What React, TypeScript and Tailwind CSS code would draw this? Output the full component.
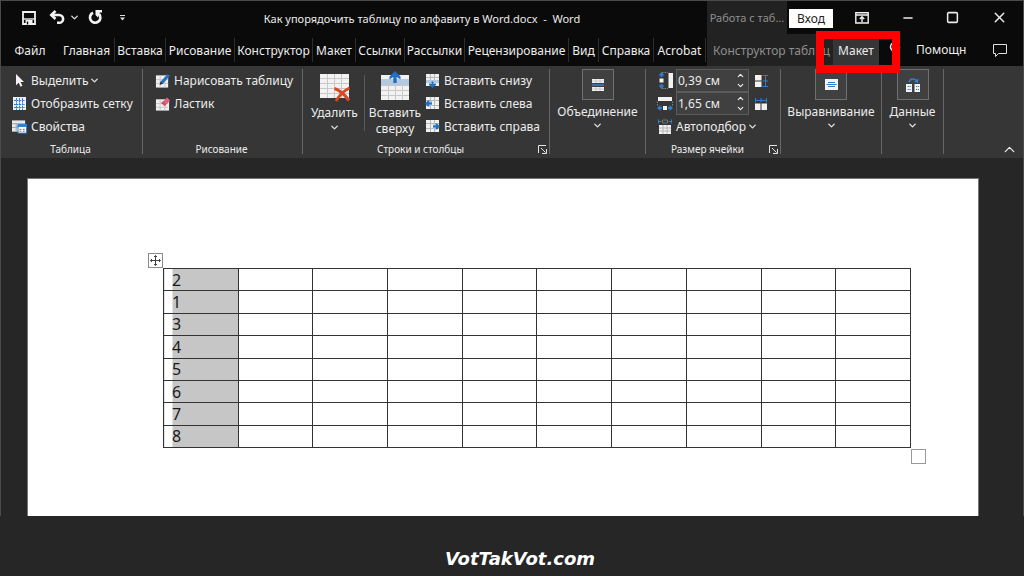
import type { ReactNode } from 'react';
import { ChevronDown, ChevronUp, Lightbulb, Minus, Square, X } from 'lucide-react';

const BLUE = '#2f7fd0';

const tabs = [
  { label: 'Главная', width: 'w-[56px]' },
  { label: 'Вставка', width: 'w-[51px]' },
  { label: 'Рисование', width: 'w-[69px]' },
  { label: 'Конструктор', width: 'w-[78px]' },
  { label: 'Макет', width: 'w-[43px]' },
  { label: 'Ссылки', width: 'w-[49px]' },
  { label: 'Рассылки', width: 'w-[60px]' },
  { label: 'Рецензирование', width: 'w-[104px]' },
  { label: 'Вид', width: 'w-[30px]' },
  { label: 'Справка', width: 'w-[55px]' },
  { label: 'Acrobat', width: 'w-[52px]' },
];

function SaveIcon() {
  return (
    <svg width="14" height="14" viewBox="0 0 14 14" fill="none" stroke="#f2f2f2" strokeWidth="1.8">
      <path d="M1 1h12v12H1z" />
      <path d="M1 8h12" strokeWidth="1.4" />
      <path d="M3.500 9h7v4h-7z" fill="#f2f2f2" stroke="none" />
      <path d="M5.500 10.500v3" stroke="#0a0a0a" strokeWidth="1.400" />
    </svg>
  );
}

function UndoIcon() {
  return (
    <svg width="16" height="15" viewBox="0 0 16 15" fill="none" stroke="#f2f2f2" strokeWidth="2.6">
      <path d="M6.500 1 2.300 5l4.200 4" />
      <path d="M2.500 5h7.700a3.800 3.800 0 0 1 0 7.800H8" />
    </svg>
  );
}

function RedoIcon() {
  return (
    <svg width="15" height="15" viewBox="0 0 15 15" fill="none" stroke="#f2f2f2" strokeWidth="2.7">
      <path d="M5 2.800A5.200 5.200 0 1 0 11 4" />
      <path d="M7.500 0H14v2.400h-2.200L10 7.500 7.500 5z" fill="#f2f2f2" stroke="none" />
    </svg>
  );
}

function CustomizeIcon() {
  return (
    <svg width="7" height="6" viewBox="0 0 7 6" fill="#e0e0e0">
      <path d="M1 0h5v1H1zM1 2.6h5L3.5 5.4z" />
    </svg>
  );
}

function RibbonOptionsIcon() {
  return (
    <svg width="14" height="12" viewBox="0 0 14 12" fill="none" stroke="#f2f2f2" strokeWidth="1.4">
      <path d="M.8 .8h12.4v10.2H.8zM.8 3h12.4" />
      <path d="M7 10V5M4.800 7 7 4.800 9.200 7" />
    </svg>
  );
}

function CommentIcon() {
  return (
    <svg width="16" height="15" viewBox="0 0 16 15" fill="none" stroke="#e0e0e0">
      <path d="M1.500 1.500h13v9H6.500l-3 3v-3h-2z" />
    </svg>
  );
}

function CursorIcon() {
  return (
    <svg width="15" height="15" viewBox="0 0 15 15">
      <path d="M4 1v11.2l2.7-2.5 1.8 4 1.9-.9-1.8-3.8H12z" fill="#f2f2f2" />
    </svg>
  );
}

function GridIcon() {
  return (
    <svg width="15" height="15" viewBox="0 0 15 15" fill="none">
      <path d="M1 1h13v13H1z" fill="#f0f0f0" />
      <path d="M4.500 2v12M7.500 2v12M10.500 2v12M2 4.500h11M2 8.500h11M2 11.500h11" stroke={BLUE} strokeDasharray="2 .6" />
    </svg>
  );
}

function PropertiesIcon() {
  return (
    <svg width="16" height="15" viewBox="0 0 16 15" fill="none">
      <path d="M0 1h14v12H0z" fill="#e8e8e8" />
      <path d="M0 4.500h14M0 8.500h7M4.500 4v9" stroke="#a0a0a0" />
      <path d="M6.500 5.500h9v9h-9z" fill="#fff" stroke={BLUE} />
      <path d="M6 6.500h10" stroke={BLUE} strokeWidth="3" />
      <path d="M8 10.500h2m1.500 0h2M8 12.500h2m1.500 0h2" stroke="#6b6b6b" />
    </svg>
  );
}

function DrawTableIcon() {
  return (
    <svg width="16" height="16" viewBox="0 0 16 16" fill="none">
      <path d="M1 2h13v13H1z" fill="#f0f0f0" />
      <path d="M1 6.500h13M1 10.500h13M5.500 2v13M10.500 2v13" stroke="#c4c4c4" />
      <path d="m5 12 1-3.500L13.500 .500l2.500 2L8.500 11z" fill="#2a6fbe" />
      <path d="m5 12 1-3.500L8.500 11z" fill="#333" />
    </svg>
  );
}

function EraserIcon() {
  return (
    <svg width="16" height="16" viewBox="0 0 16 16" fill="none">
      <path d="M1 3h14v12H1z" fill="#f0f0f0" />
      <path d="M1 7.500h13M1 11.500h13M5.500 3v12M10.500 3v12" stroke="#c4c4c4" />
      <path d="m6.500 7 6.500-6L16 4.500 10.500 10z" fill="#e0607e" />
      <path d="m6.500 7 2-1.800L12 8.500 10.500 10z" fill="#c8506c" />
    </svg>
  );
}

function DeleteIcon() {
  return (
    <svg width="32" height="30" viewBox="0 0 32 30" fill="none">
      <path d="M1 2h29v24H1z" fill="#f2f2f2" />
      <path d="M1 6.500h29M1 11.500h29M1 16.500h29M1 21.500h29M8.500 2v24M15.500 2v24M22.500 2v24" stroke="#c8c8c8" />
      <path d="M15.500 16.500c5 1.500 10 6 14.500 12M30.500 16c-5 2.500-10 7-13.500 13" stroke="#d9481f" strokeWidth="3" />
    </svg>
  );
}

function InsertAboveIcon() {
  return (
    <svg width="30" height="30" viewBox="0 0 30 30" fill="none">
      <path d="M1 4h28v25H1z" fill="#f2f2f2" />
      <path d="M1 9h28v5H1z" fill="#b3c9e0" />
      <path d="M1 8.500h28M1 14.500h28M1 19.500h28M1 24.500h28M8.500 14v15M15.500 14v15M22.500 14v15" stroke="#c8c8c8" />
      <path d="M15 0 9.500 5.500v3l3.800-2.500V12h3.400V6l3.800 2.500v-3z" fill="#1f6fc4" />
    </svg>
  );
}

function InsertIcon({ side }: { side: 'below' | 'left' | 'right' }) {
  return (
    <svg width="15" height="15" viewBox="0 0 15 15" fill="none">
      <path d="M1 1h13v12H1z" fill="#f0f0f0" />
      <path d="M1 4.500h13M1 9.500h13M5.500 1v12M9.500 1v12" stroke="#b8b8b8" />
      {side === 'below' && (
        <>
          <path d="M1 7h13v3H1z" fill="#b3c9e0" />
          <path d="M7.500 15 4 12v-1.500l2.500.5V8.500h2V11l2.500-.500V12z" fill="#1f6fc4" />
        </>
      )}
      {side === 'left' && (
        <>
          <path d="M3 5h4v5H3z" fill="#b3c9e0" />
          <path d="M0 7.500 3 4.500h1.500L4 6.500h3v2H4l.5 2H3z" fill="#1f6fc4" />
        </>
      )}
      {side === 'right' && (
        <>
          <path d="M8 5h4v5H8z" fill="#b3c9e0" />
          <path d="m15 7.500-3-3h-1.500l.500 2H8v2h3l-.500 2H12z" fill="#1f6fc4" />
        </>
      )}
    </svg>
  );
}

function MergeIcon() {
  return (
    <svg width="14" height="14" viewBox="0 0 14 14" fill="none">
      <path d="M1 1h12v4H1zM1 9h12v4H1z" fill="#f2f2f2" />
      <path d="M1 7h12" stroke={BLUE} strokeWidth="1.6" />
      <path d="M1 3h12M1 11h12M5 1v4M9 1v4M5 9v4M9 9v4" stroke="#b0b0b0" strokeWidth=".6" />
    </svg>
  );
}

function AlignIcon() {
  return (
    <svg width="15" height="13" viewBox="0 0 15 13" fill="none">
      <path d="M1 1h13v11H1z" fill="#f2f2f2" />
      <path d="M4 4.500h7M2.500 6.500h10M4 8.500h7" stroke={BLUE} />
    </svg>
  );
}

function DataIcon() {
  return (
    <svg width="16" height="16" viewBox="0 0 16 16" fill="none">
      <path d="M1 7h6v8H1zM9.500 7H15v8H9.500z" fill="#f2f2f2" />
      <path d="M2.500 9.500H6M2.500 12.500H6M11 9.500h3M11 12.500h3" stroke={BLUE} strokeDasharray="1.300 .7" />
      <path d="M4 5c1-3.500 6-4.500 8-.5" stroke={BLUE} strokeWidth="1.500" />
      <path d="m13.500 1.500-.5 4.500-4-1.500z" fill={BLUE} />
    </svg>
  );
}

function RowHeightIcon() {
  return (
    <svg width="15" height="17" viewBox="0 0 15 17" fill="none">
      <path d="M10.500 1H15v15h-4.500z" fill="#f2f2f2" />
      <path d="M4 .5h6M4 16.500h6" stroke="#808080" strokeDasharray="1.500 1" />
      <path d="M1.500 6.500h4v4h-4z" fill="#f2f2f2" />
      <path d="M3.500 0 6.500 3.500h-2V5h-2V3.500h-2zM3.500 17l3-3.500h-2V12h-2v1.500h-2z" fill={BLUE} />
    </svg>
  );
}

function ColumnWidthIcon() {
  return (
    <svg width="16" height="15" viewBox="0 0 16 15" fill="none">
      <path d="M1 1h14v4H1z" fill="#f2f2f2" />
      <path d="M.5 5.500V10M15.500 5.500V10" stroke="#808080" strokeDasharray="1.500 1" />
      <path d="M6 10h4v4H6z" fill="#f2f2f2" />
      <path d="M0 12l3.500-3v2H5v2H3.500v2zM16 12l-3.500-3v2H11v2h1.500v2z" fill={BLUE} />
    </svg>
  );
}

function AutoFitIcon() {
  return (
    <svg width="15" height="15" viewBox="0 0 15 15" fill="none">
      <path d="M2 6h12v9H2z" fill="#f2f2f2" />
      <path d="M2 9h12M2 12h12M6 6v9M10 6v9" stroke="#a8a8a8" strokeWidth=".8" />
      <path d="M1.500 .5v4M14.500 .5v4M2 2.500h2.500M11.500 2.500H14" stroke={BLUE} />
      <path d="M5.500 1h5v3h-5z" stroke="#808080" strokeWidth=".8" />
    </svg>
  );
}

function DistributeRowsIcon() {
  return (
    <svg width="14" height="14" viewBox="0 0 14 14" fill="none">
      <path d="M1 1h6.500v5.500H1zM1 7.500h6.500V13H1z" fill="#f2f2f2" />
      <path d="M8.500 1.500H14M8.500 7H14M8.500 12.500H14M11.500 1v12" stroke={BLUE} />
    </svg>
  );
}

function DistributeColumnsIcon() {
  return (
    <svg width="14" height="14" viewBox="0 0 14 14" fill="none">
      <path d="M1 6.500h5.500V13H1zM7.500 6.500H13V13H7.500z" fill="#f2f2f2" />
      <path d="M1.500 1v4.500M7 1v4.500M12.500 1v4.500M1 3.500h12" stroke={BLUE} />
    </svg>
  );
}

function LauncherIcon() {
  return (
    <svg width="9" height="9" viewBox="0 0 9 9" fill="none" stroke="#e4e4e4">
      <path d="M.5 8V.5H8M3 3l4.500 4.500M8.500 4v4.500H4" />
    </svg>
  );
}

function MoveHandleIcon() {
  return (
    <svg width="13" height="13" viewBox="0 0 13 13" fill="none" stroke="#444">
      <path d="M6.500 1.500v10M1.500 6.500h10M5 3l1.500-1.500L8 3M5 10l1.500 1.500L8 10M3 5 1.500 6.500 3 8M10 5l1.500 1.500L10 8" />
    </svg>
  );
}

function Caret() {
  return <ChevronDown size={11} strokeWidth={3} className="shrink-0 text-[#e0e0e0]" />;
}

function Command({ icon, label, menu }: { icon: ReactNode; label: string; menu?: boolean }) {
  return (
    <button type="button" className="flex h-[23px] items-center whitespace-nowrap">
      <span className="mr-1 flex w-[15px] shrink-0 justify-center">{icon}</span>
      <span>{label}</span>
      {menu && <span className="ml-px"><Caret /></span>}
    </button>
  );
}

function Group({
  label,
  launcher,
  width,
  children,
}: {
  label?: string;
  launcher?: boolean;
  width: string;
  children: ReactNode;
}) {
  return (
    <section className={`flex h-[85px] shrink-0 flex-col border-r border-[#666] ${width}`}>
      <div className="flex h-[72px] shrink-0">{children}</div>
      <div className="flex items-center pr-[2px] text-[10px] leading-4">
        {label && <span className="flex-1 text-center">{label}</span>}
        {launcher && (
          <button type="button" aria-label={`${label}: параметры`}>
            <LauncherIcon />
          </button>
        )}
      </div>
    </section>
  );
}

function Collapsed({ icon, label }: { icon: ReactNode; label: string }) {
  return (
    <button type="button" className="flex flex-1 flex-col items-center">
      <span className="flex h-[31px] w-8 shrink-0 items-center justify-center border border-[#707070] bg-[#404040]">{icon}</span>
      <span className="mt-1 leading-4">{label}</span>
      <Caret />
    </button>
  );
}

function SizeField({ icon, label, value, after }: { icon: ReactNode; label: string; value: string; after: ReactNode }) {
  return (
    <div className="flex h-[23px] items-center">
      <span className="flex w-5 shrink-0 justify-center">{icon}</span>
      <div className="ml-px flex h-[23px] w-[73px] border border-[#5c5c5c] bg-[#404040]">
        <input aria-label={label} defaultValue={value} className="w-0 flex-1 bg-transparent pl-px outline-none" />
        <div className="flex w-4 flex-col items-center justify-around">
          <button type="button" aria-label="Увеличить">
            <ChevronUp size={9} strokeWidth={3} />
          </button>
          <button type="button" aria-label="Уменьшить">
            <ChevronDown size={9} strokeWidth={3} />
          </button>
        </div>
      </div>
      <button type="button" aria-label="Выровнять" className="ml-[5px]">
        {after}
      </button>
    </div>
  );
}

function TitleBar() {
  return (
    <header className="flex h-[33px] items-center text-[11px]">
      <div className="flex w-[200px] items-center pl-[21px]">
        <button type="button" aria-label="Сохранить"><SaveIcon /></button>
        <button type="button" aria-label="Отменить" className="ml-[13px]"><UndoIcon /></button>
        <button type="button" aria-label="Список отмены" className="ml-1"><Caret /></button>
        <button type="button" aria-label="Повторить" className="ml-2"><RedoIcon /></button>
        <button type="button" aria-label="Настроить панель" className="ml-4"><CustomizeIcon /></button>
      </div>
      <h1 className="flex-1 pt-1 pl-[6px] text-center whitespace-pre">Как упорядочить таблицу по алфавиту в Word.docx  -  Word</h1>
      <div className="ml-[70px] flex h-full w-[80px] items-center justify-center bg-[#222] pt-[2px] text-[#8f8f8f]">
        Работа с таб...
      </div>
      <button type="button" className="mt-[2px] ml-[2px] flex h-[19px] w-[44px] items-center justify-center bg-white text-[12px] text-[#222]">
        Вход
      </button>
      <div className="flex w-[190px] items-center justify-between pr-[15px] pl-[22px]">
        <button type="button" aria-label="Параметры ленты"><RibbonOptionsIcon /></button>
        <button type="button" aria-label="Свернуть"><Minus size={14} strokeWidth={2.4} /></button>
        <button type="button" aria-label="Развернуть"><Square size={13} strokeWidth={2.8} /></button>
        <button type="button" aria-label="Закрыть"><X size={17} strokeWidth={2} /></button>
      </div>
    </header>
  );
}

function TabBar() {
  return (
    <nav className="flex h-8 text-[12px]">
      <button type="button" className="w-[58px] shrink-0 pt-px">Файл</button>
      <div className="flex shrink-0 items-center">
        {tabs.map((tab) => (
          <button
            key={tab.label}
            type="button"
            className={`flex h-6 shrink-0 items-center justify-center border-r border-[#2e2e2e] pt-[2px] whitespace-nowrap ${tab.width}`}
          >
            {tab.label}
          </button>
        ))}
      </div>
      <div className="ml-px flex shrink-0 bg-[#222]">
        <button type="button" className="w-[126px] pt-[2px] pl-[6px] text-left whitespace-nowrap text-[#8f8f8f]">
          Конструктор таблиц
        </button>
        <div className="relative flex w-[46px]">
          <button type="button" className="mt-1 flex-1 bg-[#363636] pb-[2px]">Макет</button>
          <div className="pointer-events-none absolute -top-[3px] -right-[21px] -left-[17px] z-10 h-[42px] border-8 border-[#fe0000]" />
        </div>
      </div>
      <div className="flex flex-1 items-center pr-[15px] pl-[7px]">
        <Lightbulb size={18} className="shrink-0" />
        <button type="button" className="ml-3">Помощн</button>
        <button type="button" aria-label="Примечания" className="ml-auto"><CommentIcon /></button>
      </div>
    </nav>
  );
}

function Ribbon() {
  return (
    <div className="flex h-[92px] bg-[#363636] pt-[3px] text-[12px]">
      <Group label="Таблица" width="w-[142px]">
        <div className="pl-[11px]">
          <Command icon={<CursorIcon />} label="Выделить" menu />
          <Command icon={<GridIcon />} label="Отобразить сетку" />
          <Command icon={<PropertiesIcon />} label="Свойства" />
        </div>
      </Group>
      <Group label="Рисование" width="w-[160px]">
        <div className="pl-3">
          <Command icon={<DrawTableIcon />} label="Нарисовать таблицу" />
          <Command icon={<EraserIcon />} label="Ластик" />
        </div>
      </Group>
      <Group label="Строки и столбцы" launcher width="w-[247px]">
        <button type="button" className="mt-[3px] flex w-[61px] flex-col items-center pl-[2px]">
          <DeleteIcon />
          <span className="mt-[3px] leading-4">Удалить</span>
          <span className="mt-px"><Caret /></span>
        </button>
        <div className="mt-[6px] h-[56px] w-px bg-[#5a5a5a]" />
        <button type="button" className="mt-[2px] flex w-[60px] flex-col items-center">
          <InsertAboveIcon />
          <span className="mt-1 text-center leading-4">Вставить<br />сверху</span>
        </button>
        <div>
          <Command icon={<InsertIcon side="below" />} label="Вставить снизу" />
          <Command icon={<InsertIcon side="left" />} label="Вставить слева" />
          <Command icon={<InsertIcon side="right" />} label="Вставить справа" />
        </div>
      </Group>
      <Group width="w-[96px]">
        <Collapsed icon={<MergeIcon />} label="Объединение" />
      </Group>
      <Group label="Размер ячейки" launcher width="w-[135px]">
        <div className="pl-[9px]">
          <SizeField icon={<RowHeightIcon />} label="Высота" value="0,39 см" after={<DistributeRowsIcon />} />
          <SizeField icon={<ColumnWidthIcon />} label="Ширина" value="1,65 см" after={<DistributeColumnsIcon />} />
          <div className="pl-[2px]">
            <Command icon={<AutoFitIcon />} label="Автоподбор" menu />
          </div>
        </div>
      </Group>
      <Group width="w-[101px]">
        <Collapsed icon={<AlignIcon />} label="Выравнивание" />
      </Group>
      <Group width="w-[62px]">
        <Collapsed icon={<DataIcon />} label="Данные" />
      </Group>
      <div className="flex flex-1 items-end justify-end pr-[5px]">
        <button type="button" aria-label="Свернуть ленту"><ChevronUp size={17} strokeWidth={1.8} /></button>
      </div>
    </div>
  );
}

function Document() {
  return (
    <main className="pt-5 pr-11 pl-[26px]">
      <div className="h-[338px] border border-b-0 border-[#777] bg-white pt-[74px] pl-[120px] text-[#1a1a1a]">
        <div className="flex h-[15px] w-[15px] items-center justify-center border border-[#8a8a8a]">
          <MoveHandleIcon />
        </div>
        <div className="flex items-end pl-[15px]">
          <table className="h-[180px] w-[748px] table-fixed border-collapse text-[16px] leading-5">
            <tbody>
              {[2, 1, 3, 4, 5, 6, 7, 8].map((value) => (
                <tr key={value}>
                  <td className="border border-[#333] bg-[linear-gradient(to_right,transparent_8px,#c6c6c6_8px)] p-0 pl-2">{value}</td>
                  {Array.from({ length: 9 }, (_, column) => (
                    <td key={column} className="border border-[#333] p-0" />
                  ))}
                </tr>
              ))}
            </tbody>
          </table>
          <div className="-mb-4 h-[15px] w-[15px] shrink-0 border border-[#999]" />
        </div>
      </div>
    </main>
  );
}

export default function App() {
  return (
    <div className="min-h-screen bg-[#262626] font-['Noto_Sans','Open_Sans',sans-serif] text-[#ececec]">
      <div className="border-x border-[#4a4a4a]">
        <div className="border-t border-[#4a4a4a] bg-[#0a0a0a]">
          <TitleBar />
          <TabBar />
        </div>
        <Ribbon />
        <Document />
      </div>
      <footer className="pt-[31px] pb-1 pl-4 text-center font-['DejaVu_Sans',sans-serif] text-[18px] leading-6 font-bold text-white italic">
        <p>VotTakVot.com</p>
      </footer>
    </div>
  );
}
